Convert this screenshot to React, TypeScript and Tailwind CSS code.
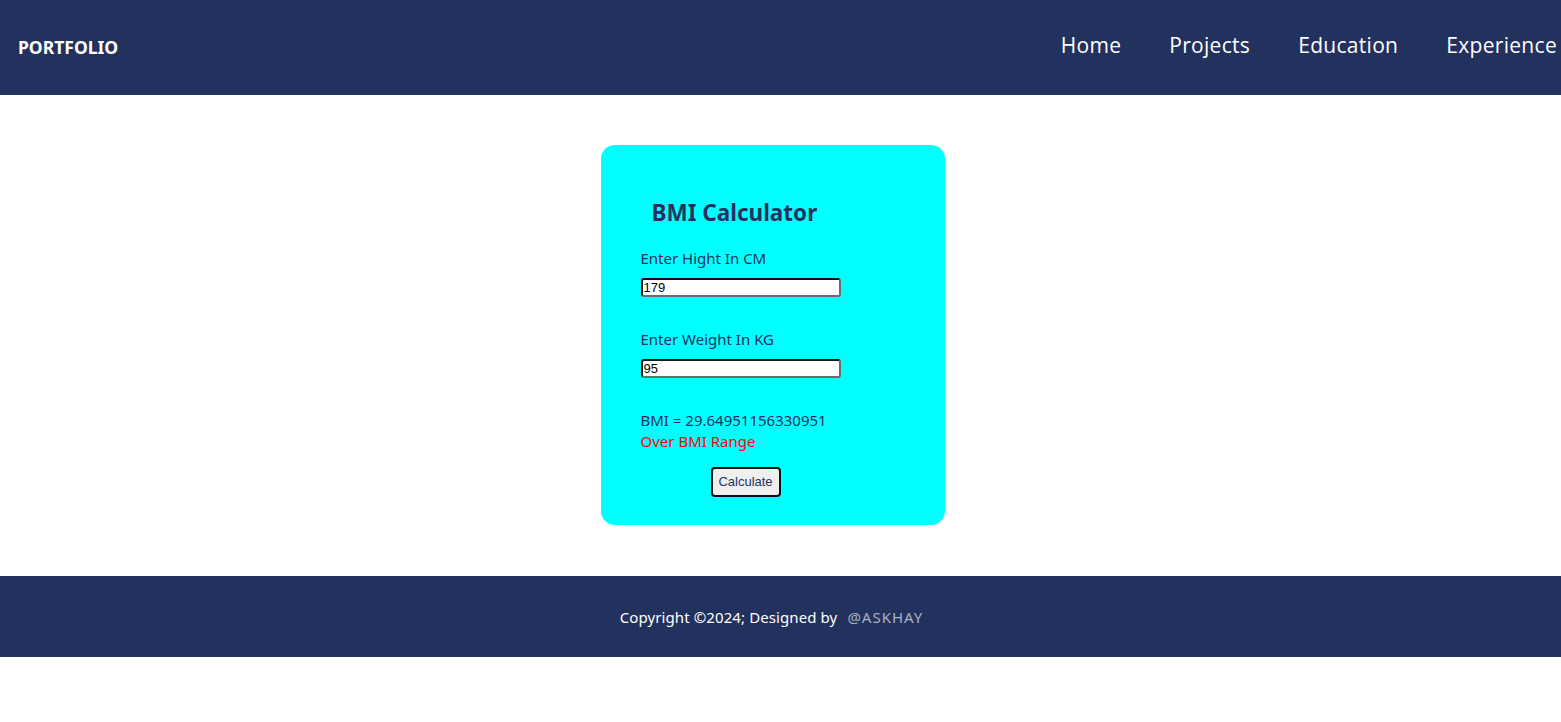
export default function App() {
  return (
    <div className="w-full bg-white" style={{ fontFamily: '"Noto Sans", "Open Sans", sans-serif' }}>
      <header className="h-[95px] bg-[#22315e] flex items-center justify-between overflow-hidden">
        <div className="pl-[18px] text-white font-bold text-[17.5px]">PORTFOLIO</div>
        <nav className="flex items-center gap-[48px] text-white text-[21px] tracking-[0.3px] whitespace-nowrap pr-[4px] mb-[4px]" style={{ fontFamily: '"Open Sans", sans-serif' }}>
          <span>Home</span>
          <span>Projects</span>
          <span>Education</span>
          <span>Experience</span>
        </nav>
      </header>
      <main className="flex justify-center pr-[16px] pt-[50px] pb-[51px]">
        <div className="w-[344px] h-[380px] bg-[#00ffff] rounded-[14px] pl-[40px] pt-[52px] text-[#22315e]">
          <h2 className="ml-[11px] text-[22.5px] font-bold leading-[32px] h-[32px]">BMI Calculator</h2>
          <div className="mt-[19px] text-[15px] leading-[20px]">Enter Hight In CM</div>
          <input
            readOnly
            value="179"
            className="mt-[10px] block w-[200px] h-[19px] border-2 border-[#6b6b6b] border-t-[#111] border-l-[#111] rounded-[3px] bg-white px-[1px] text-[13px] text-black"
            style={{ fontFamily: 'Arial, "Liberation Sans", sans-serif' }}
          />
          <div className="mt-[32px] text-[15px] leading-[20px]">Enter Weight In KG</div>
          <input
            readOnly
            value="95"
            className="mt-[10px] block w-[200px] h-[19px] border-2 border-[#6b6b6b] border-t-[#111] border-l-[#111] rounded-[3px] bg-white px-[1px] text-[13px] text-black"
            style={{ fontFamily: 'Arial, "Liberation Sans", sans-serif' }}
          />
          <div className="mt-[32px] text-[15px] leading-[21px]">BMI = 29.64951156330951</div>
          <div className="text-[15px] leading-[21px] text-[#ff0000]">Over BMI Range</div>
          <div className="mt-[15px] ml-[70px]">
            <button
              className="w-[70px] h-[30px] bg-[#efefef] border-2 border-[#111] rounded-[4px] text-[13px] text-[#22315e]"
              style={{ fontFamily: 'Arial, "Liberation Sans", sans-serif' }}
            >
              Calculate
            </button>
          </div>
        </div>
      </main>
      <footer className="h-[81px] bg-[#22315e] flex items-center justify-center pr-[18px]">
        <span className="text-white text-[15px] tracking-[0.1px] mt-[2px]">Copyright ©2024; Designed by</span>
        <span className="ml-[10px] text-[#a9b0c0] text-[15px] tracking-[1px] mt-[2px]">@ASKHAY</span>
      </footer>
    </div>
  );
}
